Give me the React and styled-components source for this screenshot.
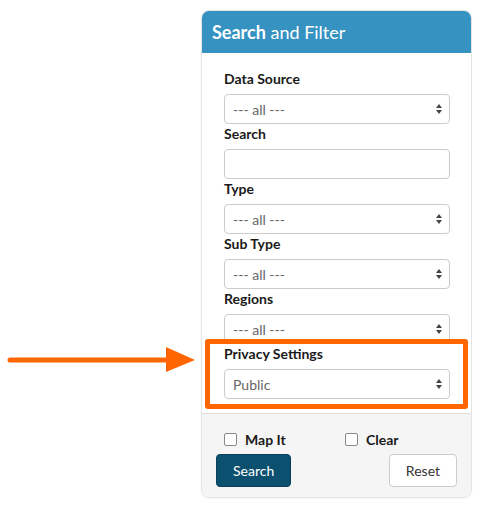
import React from "react";
import styled, { createGlobalStyle } from "styled-components";

const GlobalStyle = createGlobalStyle`
  body {
    margin: 0;
    background: #fff;
    font-family: Lato, "Open Sans", sans-serif;
    color: #222;
  }
`;

const Page = styled.div`
  position: relative;
  width: 483px;
  height: 513px;
  padding: 10px 0 0 201px;
  box-sizing: border-box;
`;

const Pointer = styled.svg`
  position: absolute;
  left: 0;
  top: 340px;
`;

const Panel = styled.div`
  width: 271px;
  border: 1px solid #e3e3e3;
  border-radius: 8px;
  overflow: hidden;
  box-sizing: border-box;
  box-shadow: 0 1px 2px rgba(0, 0, 0, 0.04);
`;

const Header = styled.div`
  height: 43px;
  background: #3592c1;
  color: #fff;
  font-size: 18px;
  display: flex;
  align-items: center;
  padding-left: 11px;
  margin: -1px -1px 0;
  b {
    font-weight: 700;
  }
`;

const Body = styled.div`
  padding: 16px 0 14px 22px;
  background: #fff;
`;

const Field = styled.div`
  position: relative;
  width: 226px;
`;

const Label = styled.label`
  display: block;
  font-size: 14px;
  font-weight: 700;
  line-height: 20px;
  margin-bottom: 5px;
  color: #1a1a1a;
`;

const SelectBox = styled.div`
  height: 30px;
  box-sizing: border-box;
  border: 1px solid #ccc;
  border-radius: 4px;
  background: #fff;
  display: flex;
  align-items: center;
  justify-content: space-between;
  padding: 0 6px 0 8px;
  font-size: 14px;
  color: #666;
`;

const TextInput = styled.div`
  height: 30px;
  box-sizing: border-box;
  border: 1px solid #ccc;
  border-radius: 4px;
  background: #fff;
`;

const Highlight = styled.div`
  position: absolute;
  top: -5px;
  left: -19px;
  right: -18px;
  bottom: -10px;
  border: 5px solid #ff6600;
  border-radius: 3px;
  pointer-events: none;
`;

const Footer = styled.div`
  background: #f5f5f5;
  border-top: 1px solid #ddd;
  padding: 15px 14px 10px 14px;
`;

const CheckRow = styled.div`
  display: flex;
  height: 20px;
  align-items: center;
  padding-left: 8px;
  margin-bottom: 5px;
`;

const Check = styled.label`
  width: 121px;
  flex-shrink: 0;
  display: flex;
  align-items: center;
  gap: 8px;
  font-size: 14px;
  font-weight: 700;
  color: #1a1a1a;
`;

const Box = styled.span`
  width: 11px;
  height: 11px;
  border: 1px solid #888;
  border-radius: 2px;
  background: #fff;
`;

const ButtonRow = styled.div`
  display: flex;
  justify-content: space-between;
`;

const Button = styled.button`
  height: 33px;
  box-sizing: border-box;
  padding: 0 16px;
  border-radius: 4px;
  font-family: Lato, "Open Sans", sans-serif;
  font-size: 14px;
  border: 1px solid ${(p) => (p.$primary ? "#093f58" : "#ccc")};
  background: ${(p) => (p.$primary ? "#0c5070" : "#fff")};
  color: ${(p) => (p.$primary ? "#fff" : "#333")};
`;

const Arrows = () => (
  <svg width="8" height="12" viewBox="0 0 8 12">
    <path d="M4 1 L7 5 L1 5 Z M4 11 L7 7 L1 7 Z" fill="#444" />
  </svg>
);

const Select = ({ value }) => (
  <SelectBox>
    <span>{value}</span>
    <Arrows />
  </SelectBox>
);

const fields = [
  { label: "Data Source", value: "--- all ---" },
  { label: "Search" },
  { label: "Type", value: "--- all ---" },
  { label: "Sub Type", value: "--- all ---" },
  { label: "Regions", value: "--- all ---" },
];

export default function App() {
  return (
    <Page>
      <GlobalStyle />
      <Pointer width="200" height="40" viewBox="0 0 200 40">
        <line x1="10" y1="20" x2="168" y2="20" stroke="#ff6600" strokeWidth="5" strokeLinecap="round" />
        <path d="M166 7 L195 20 L166 32 Z" fill="#ff6600" />
      </Pointer>
      <Panel>
        <Header>
          <b>Search</b>&nbsp;and Filter
        </Header>
        <Body>
          {fields.map((f) => (
            <Field key={f.label}>
              <Label>{f.label}</Label>
              {f.value ? <Select value={f.value} /> : <TextInput />}
            </Field>
          ))}
          <Field>
            <Highlight />
            <Label>Privacy Settings</Label>
            <Select value="Public" />
          </Field>
        </Body>
        <Footer>
          <CheckRow>
            <Check>
              <Box /> Map It
            </Check>
            <Check>
              <Box /> Clear
            </Check>
          </CheckRow>
          <ButtonRow>
            <Button $primary>Search</Button>
            <Button>Reset</Button>
          </ButtonRow>
        </Footer>
      </Panel>
    </Page>
  );
}
